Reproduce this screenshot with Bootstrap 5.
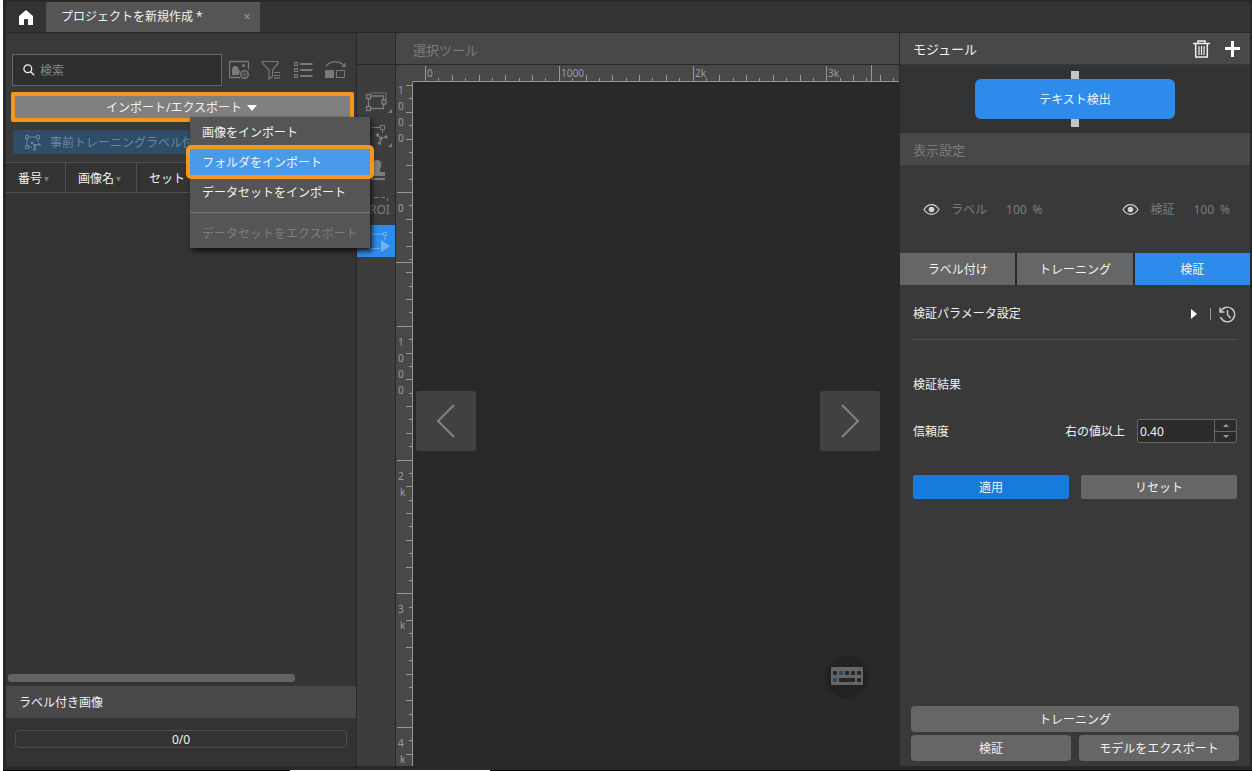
<!DOCTYPE html>
<html lang="ja" data-bs-theme="dark">
<head>
<meta charset="utf-8">
<meta name="viewport" content="width=device-width, initial-scale=1">
<title>プロジェクトを新規作成</title>
<link href="https://cdn.jsdelivr.net/npm/bootstrap@5.3.0/dist/css/bootstrap.min.css" rel="stylesheet">
<style>
  :root { --edge: #282828; --bar: #484848; --deep: #333; --panel: #393939; --blue: #2d8ceb; --grey: #666; --mark: #f4971c; --dim: #7c7c7c; }
  body { font: 12px/18px "Noto Sans", "Noto Sans CJK JP", sans-serif; color: #f2f2f2; background: var(--edge); min-height: 100vh; }
  svg { display: block; flex: none; }
  button { font: inherit; color: inherit; border: 0; padding: 0; background: none; }
  .app-shell { height: 100vh; border-left: 3px solid #fff; }
  .app-frame { padding: 2px 2px 4px 3px; min-height: 0; }
  .desk-edge { height: 1px; background: #050505; }
  .desk-window { width: 16%; height: 1px; margin-left: 23%; background: #fff; }
  .title-row { height: 30px; background: var(--deep); }
  .home-btn { width: 40px; }
  .doc-tab { width: 214px; background: #555; padding: 0 8px 0 15px; }
  .close-x { color: #999; width: 10px; height: 18px; }
  .work { gap: 1px; margin-top: 1px; min-height: 0; }
  .side-col { width: 350px; flex: none; background: var(--panel); min-height: 0; }
  .bar-title { height: 31px; padding: 0 13px; font-size: 13px; background: var(--bar); flex: none; }
  .bar-title.sub { height: 32px; padding-top: 2px; }
  .bar-title.small-txt { font-size: 12px; }
  .muted-txt { color: var(--dim); }

  .left-tools { padding: 21px 1px 8px 5px; }
  .search-row { gap: 7px; margin: 0 9px 6px 1px; }
  .search-box { width: 210px; height: 32px; border: 1px solid #666; background: #2f2f2f; padding: 0 10px; gap: 5px; }
  .search-box input { background: none; border: 0; outline: 0; color: #ddd; width: 100%; padding: 2px 0 0; font: inherit; }
  .search-box input::placeholder { color: #858585; opacity: 1; }
  .tool-ic { color: #7a7a7a; }
  .import-btn { width: 343px; height: 30px; padding: 2px 2px 0 0; border: 4px solid var(--mark); border-radius: 2px; background: #808080; gap: 5px; }
  .pretrain-btn { width: 338px; height: 24px; margin: 8px 0 0 2px; background: #2d4d69; color: #6d869b; border-radius: 2px; padding: 2px 0 0 12px; gap: 9px; white-space: nowrap; }
  .import-menu { position: absolute; left: 179px; top: 25px; z-index: 5; width: 180px; background: #555; padding: 2px 0; gap: 4px; box-shadow: 2px 3px 5px #111; }
  .import-menu button { height: 26px; padding: 2px 12px 0; text-align: left; white-space: nowrap; }
  .import-menu .picked { background: #4a9aec; outline: 4px solid var(--mark); border-radius: 1px; }
  .import-menu hr { margin: 3px 0; border-top: 1px solid #747474; opacity: 1; }
  .import-menu button:disabled { color: #7d7d7d; }

  .list-area { background: #343434; }
  .img-table { width: 100%; table-layout: fixed; border-collapse: separate; border-spacing: 0; background: var(--deep); border-top: 1px solid #505050; border-bottom: 1px solid #505050; }
  .img-table th { height: 29px; padding: 2px 0 0 12px; font-weight: 400; border-right: 1px solid #505050; }
  .img-table th:last-child { border-right: 0; }
  .caret { display: inline-block; vertical-align: 1px; margin-left: 2px; color: #777; }
  .h-scroll { width: 287px; height: 8px; margin: 0 2px 4px; border-radius: 3px; background: #636363; }
  .count-area { background: var(--deep); padding: 12px 9px 18px; }
  .count-box { height: 18px; border: 1px solid #4e4e4e; border-radius: 4px; line-height: 18px; }

  .strip { width: 38px; flex: none; gap: 1px; }
  .strip-head { height: 31px; background: #3d3d3d; flex: none; }
  .strip-tools { background: #3d3d3d; padding-top: 20px; gap: 3px; color: #7c7c7c; }
  .strip-tools button { height: 32px; }
  .strip-tools .on { background: var(--blue); color: #73b2f1; }

  .stage { min-width: 0; gap: 1px; }
  .stage-head { padding: 2px 13px 0 17px; }
  .ruler { background: var(--bar); overflow: hidden; flex: none; }
  .ruler-x { height: 17px; }
  .ruler-y { width: 17px; }
  .ruler svg { width: 100%; height: 100%; }
  .ruler path { fill: none; stroke: #989898; }
  .ruler text { fill: #9c9c9c; font-size: 10px; }
  .canvas-area { background: #292929; padding: 0 19px 6px 3px; min-width: 0; }
  .step-btn { width: 60px; height: 60px; border-radius: 3px; background: #414141; color: #828282; }
  .keys-btn { position: absolute; right: 32px; bottom: 70px; width: 40px; height: 40px; border-radius: 50%; background: #222; box-shadow: 0 1px 3px #1c1c1c; }

  .module-head { padding-right: 9px; }
  .module-head button:last-child { margin-left: 15px; }
  .flow { background: var(--deep); padding: 6px 0; margin-top: 1px; height: 68px; }
  .port { width: 8px; height: 8px; background: #c4c4c4; }
  .node-btn { width: 200px; height: 40px; padding-top: 2px; border-radius: 6px; background: var(--blue); }
  .show-row { padding: 2px 20px 0 23px; height: 88px; color: var(--dim); }
  .show-row svg { color: #d2d2d2; margin-right: 11px; }
  .pct { margin-left: 19px; gap: 6px; }
  .mode-tabs { gap: 2px; background: var(--edge); }
  .mode-tabs button { height: 32px; padding-top: 2px; flex: 1 1 0; background: var(--grey); }
  .mode-tabs .on { background: var(--blue); }
  .block { padding: 0 13px; }
  .param-row { height: 55px; padding-top: 4px; padding-right: 1px; border-bottom: 1px solid #505050; }
  .sep { width: 1px; height: 12px; background: #999; margin: 0 8px 0 12px; }
  .result-title { margin-top: 36px; }
  .conf-row { margin-top: 25px; }
  .conf-row > span, .conf-row > label { padding-top: 2px; }
  .spin { width: 100px; height: 24px; border: 1px solid #666; border-radius: 2px; background: #2c2c2c; margin-left: 12px; }
  .spin input { width: 76px; background: none; border: 0; padding: 2px 2px 0; color: inherit; font: inherit; outline: 0; }
  .spin-keys { width: 22px; border-left: 1px solid #666; color: #999; }
  .spin-keys button + button { border-top: 1px solid #666; }
  .act-row { gap: 12px; margin-top: 32px; }
  .half { height: 24px; padding-top: 2px; border-radius: 2px; background: var(--grey); }
  .apply { background: #167bdd; }
  .run-area { padding: 0 11px 5px; gap: 3px; }
  .run-area button { height: 26px; padding-top: 2px; border-radius: 4px; background: var(--grey); }
</style>
</head>
<body>
<div class="app-shell d-flex flex-column">
<div class="app-frame d-flex flex-column flex-fill">
  <header class="title-row d-flex">
    <button class="home-btn d-flex align-items-center justify-content-center" aria-label="ホーム">
      <svg width="14" height="15" viewBox="0 0 14 15"><path d="M7 0 14 6v9H9v-5a1 1 0 0 0-1-1H6a1 1 0 0 0-1 1v5H0V6z" fill="#fff"/></svg>
    </button>
    <div class="doc-tab d-flex align-items-center justify-content-between">
      <span>プロジェクトを新規作成 *</span><button class="close-x" aria-label="閉じる">×</button>
    </div>
  </header>

  <div class="work d-flex flex-fill">
    <aside class="side-col d-flex flex-column">
      <div class="left-tools">
        <div class="search-row d-flex align-items-center">
          <label class="search-box d-flex align-items-center">
            <svg width="12" height="12" viewBox="0 0 12 12" fill="none" stroke="#eee" stroke-width="1.3"><circle cx="4.800" cy="4.800" r="3.900"/><path d="m7.700 7.700 3.500 3.500"/></svg>
            <input type="text" placeholder="検索" aria-label="検索">
          </label>
          <div class="tool-ic d-flex flex-fill justify-content-between">
            <button aria-label="画像表示"><svg width="21" height="20" viewBox="0 0 21 20" fill="none" stroke="currentColor"><path d="M11 17.500H.5v-16h19v8" stroke-width="1.300"/><path d="M3 15V10c0-5 6-6 7 0l1 1-1 4z" fill="currentColor" stroke="none"/><circle cx="14.500" cy="5.500" r="1.600" fill="currentColor" stroke="none"/><circle cx="15.500" cy="14.500" r="3.800" stroke-width="1.500"/><circle cx="15.500" cy="14.500" r="1.300"/></svg></button>
            <button aria-label="フィルター"><svg width="20" height="20" viewBox="0 0 20 20" fill="none" stroke="currentColor" stroke-width="1.200"><path d="M.5 1.500H16v2L10.500 10v6.500L7 19V10L.5 3.500zM12 12.500h6M12 15.500h6M12 17.800h6"/></svg></button>
            <button aria-label="リスト"><svg width="19" height="20" viewBox="0 0 19 20" fill="none" stroke="currentColor"><path d="M.5 2.500h3v3h-3zM.5 8.500h3v3h-3zM.5 14.500h3v3h-3z" stroke-width="1.200"/><path d="M6 4h12.500M6 10h12.500M6 16h12.500" stroke-width="2"/></svg></button>
            <button aria-label="入れ替え"><svg width="21" height="20" viewBox="0 0 21 20" fill="none" stroke="currentColor"><path d="M.5 6.500C5 .5 15 .5 19.500 6M20 3v3.500h-3.500" stroke-width="1.200"/><path d="M0 10h9v8H0z" fill="currentColor" stroke="none"/><path d="M11.500 10.500h8v7h-8z"/></svg></button>
          </div>
        </div>
        <div class="position-relative">
          <button class="import-btn d-flex align-items-center justify-content-center" aria-expanded="true">インポート/エクスポート
            <svg width="10" height="6" viewBox="0 0 10 6"><path d="M0 0h10L5 6z" fill="#fff"/></svg></button>
          <div class="import-menu d-flex flex-column">
            <button>画像をインポート</button>
            <button class="picked">フォルダをインポート</button>
            <button>データセットをインポート</button>
            <hr>
            <button disabled>データセットをエクスポート</button>
          </div>
        </div>
        <button class="pretrain-btn d-flex align-items-center">
          <svg width="16" height="16" viewBox="0 0 16 16" fill="none" stroke="currentColor"><path d="M.5.500h3v3h-3zM11.500.500h3v3h-3zM.5 10.500h3v3h-3zM4 2h7M2 4v6M13 4v3M4 12h3M7 8l3 2 4-1M10 10v4"/><g fill="currentColor" stroke="none"><circle cx="7" cy="8" r="1.300"/><circle cx="10" cy="10.500" r="1.500"/><circle cx="14.500" cy="9.500" r="1.300"/><circle cx="9.500" cy="14.500" r="1.400"/></g></svg>
          事前トレーニングラベル付け</button>
      </div>
      <div class="list-area d-flex flex-column flex-fill">
        <table class="img-table">
          <colgroup><col width="60"><col width="71"><col></colgroup>
          <thead><tr>
            <th scope="col">番号<svg class="caret" width="5" height="5" viewBox="0 0 5 5"><path d="M0 0h5L2.500 5z" fill="currentColor"/></svg></th>
            <th scope="col">画像名<svg class="caret" width="5" height="5" viewBox="0 0 5 5"><path d="M0 0h5L2.500 5z" fill="currentColor"/></svg></th>
            <th scope="col">セット</th>
          </tr></thead>
        </table>
        <div class="h-scroll mt-auto"></div>
      </div>
      <div class="bar-title sub small-txt d-flex align-items-center">ラベル付き画像</div>
      <div class="count-area"><div class="count-box text-center">0/0</div></div>
    </aside>

    <nav class="strip d-flex flex-column" aria-label="ツール">
      <div class="strip-head"></div>
      <div class="strip-tools d-flex flex-column flex-fill">
        <button aria-label="多角形"><svg width="38" height="32" viewBox="0 0 38 32" fill="none" stroke="currentColor"><g stroke-width="1.300"><path d="M9.500 9.500h4v4h-4zM25 15h4v4h-4zM9.500 21.500h4v4h-4zM14 11h12.500v4M11.500 14v7M14 23.500h12.500V19"/></g><path d="M14 8h15v7" stroke-width="1.500" opacity=".6"/><path d="M35 24v4h-4z" fill="currentColor" stroke="none"/></svg></button>
        <button aria-label="自動ラベル"><svg width="38" height="32" viewBox="0 0 38 32" fill="none" stroke="currentColor"><path d="M9.500 5.500h4v4h-4zM23.500 5.500h4v4h-4zM9.500 18.500h4v4h-4zM14 7.500h9M11.500 10v8M25.500 10v3M20 15l4 3 5-1M24 18l-1 5"/><g fill="currentColor" stroke="none"><circle cx="20.500" cy="15" r="1.800"/><circle cx="24" cy="18.500" r="2"/><circle cx="29" cy="17" r="1.800"/><circle cx="22.500" cy="23" r="1.800"/><path d="M35 23v4h-4z"/></g></svg></button>
        <button aria-label="スタンプ"><svg width="38" height="32" viewBox="0 0 38 32" fill="currentColor"><path d="M17 14c-3-5-1-9 3-9s6 4 3 9v3h5v4H12v-4h5zM12 23h16v2H12z"/></svg></button>
        <button aria-label="ROI"><svg width="38" height="32" viewBox="0 0 38 32" fill="none" stroke="currentColor"><path d="M10 7.500h20" stroke-dasharray="4 3"/><path d="M30.500 8v3"/><text x="12" y="24" font-size="12" fill="currentColor" stroke="none">ROI</text></svg></button>
        <button class="on" aria-label="選択ツール"><svg width="38" height="32" viewBox="0 0 38 32" fill="none" stroke="currentColor"><path d="M9.500 7.500h3v3h-3zM26.500 7.500h3v3h-3zM9.500 21.500h3v3h-3zM13 9h13M11 11v10M28 11v4M13 23.500h10"/><path d="m24 15 9 6-9 6z" fill="currentColor" stroke="none"/></svg></button>
      </div>
    </nav>

    <main class="stage d-flex flex-column flex-fill">
      <div class="bar-title stage-head muted-txt d-flex align-items-center">選択ツール</div>
      <div class="d-flex flex-column flex-fill">
        <div class="ruler ruler-x"><svg id="rulerX"></svg></div>
        <div class="d-flex flex-fill">
          <div class="ruler ruler-y"><svg id="rulerY"></svg></div>
          <div class="canvas-area position-relative d-flex flex-fill align-items-center justify-content-between">
            <button class="step-btn d-flex align-items-center justify-content-center" aria-label="前へ"><svg width="20" height="34" viewBox="0 0 20 34" fill="none" stroke="currentColor" stroke-width="2"><path d="M18 1 2 17l16 16"/></svg></button>
            <button class="step-btn d-flex align-items-center justify-content-center" aria-label="次へ"><svg width="20" height="34" viewBox="0 0 20 34" fill="none" stroke="currentColor" stroke-width="2"><path d="m2 1 16 16L2 33"/></svg></button>
            <button class="keys-btn d-flex align-items-center justify-content-center" aria-label="キーボード"><svg width="32" height="18" viewBox="0 0 32 18"><rect width="32" height="18" rx="1" fill="#656565"/><g fill="#262626"><rect x="2" y="4" width="4" height="4" rx="1"/><rect x="14" y="4" width="4" height="4" rx="1"/><rect x="20" y="4" width="4" height="4" rx="1"/><rect x="26" y="4" width="4" height="4" rx="1"/><rect x="8" y="11" width="16" height="4" rx="1"/><rect x="26" y="11" width="4" height="4" rx="1"/></g><g fill="#294866"><rect x="8" y="4" width="4" height="4" rx="1"/><rect x="2" y="11" width="4" height="4" rx="1"/></g></svg></button>
          </div>
        </div>
      </div>
    </main>

    <aside class="side-col d-flex flex-column">
      <div class="bar-title module-head d-flex align-items-center">モジュール
        <button class="ms-auto" aria-label="削除"><svg width="17" height="18" viewBox="0 0 17 18" fill="none" stroke="#eee"><path d="M0 3.500h17M5 3V1h7v2" stroke-width="1.500"/><path d="M2.700 4v13h11.600V4" stroke-width="1.500"/><path d="M6 6v9M8.500 6v9M11 6v9" stroke-width="1.200"/></svg></button>
        <button aria-label="追加"><svg width="16" height="16" viewBox="0 0 16 16"><path d="M7.500 0v16M0 7.500h15" stroke="#fff" stroke-width="3"/></svg></button>
      </div>
      <div class="flow d-flex flex-column align-items-center">
        <div class="port"></div><button class="node-btn">テキスト検出</button><div class="port"></div>
      </div>
      <div class="bar-title sub muted-txt d-flex align-items-center">表示設定</div>
      <div class="show-row d-flex align-items-center justify-content-between">
        <span class="d-flex align-items-center"><svg width="17" height="12" viewBox="0 0 17 12"><path d="M1 5.500c4-6.500 11-6.500 15 0-4 6.500-11 6.500-15 0z" fill="none" stroke="currentColor" stroke-width="1.200"/><circle cx="8.500" cy="5.500" r="2.800" fill="currentColor"/></svg>ラベル<span class="pct d-flex"><span>100</span><span>%</span></span></span>
        <span class="d-flex align-items-center"><svg width="17" height="12" viewBox="0 0 17 12"><path d="M1 5.500c4-6.500 11-6.500 15 0-4 6.500-11 6.500-15 0z" fill="none" stroke="currentColor" stroke-width="1.200"/><circle cx="8.500" cy="5.500" r="2.800" fill="currentColor"/></svg>検証<span class="pct d-flex"><span>100</span><span>%</span></span></span>
      </div>
      <div class="mode-tabs d-flex"><button>ラベル付け</button><button>トレーニング</button><button class="on">検証</button></div>
      <div class="block">
        <div class="param-row d-flex align-items-center">検証パラメータ設定
          <button class="ms-auto" aria-label="展開"><svg width="7" height="12" viewBox="0 0 7 12"><path d="M0 1v10l6-5z" fill="#fff"/></svg></button>
          <span class="sep"></span>
          <button aria-label="履歴"><svg width="17" height="17" viewBox="0 0 17 17" fill="none" stroke="#ccc" stroke-width="1.400"><path d="M1.500 6A7.300 7.300 0 1 1 1.500 11M1 1.500V6h4.500M8.500 4v4.500l3 3.500"/></svg></button>
        </div>
        <div class="result-title">検証結果</div>
        <div class="conf-row d-flex align-items-center">
          <span>信頼度</span><label class="ms-auto" for="conf">右の値以上</label>
          <div class="spin d-flex">
            <input id="conf" type="text" value="0.40">
            <div class="spin-keys d-flex flex-column">
              <button class="flex-fill d-flex align-items-center justify-content-center" aria-label="増やす"><svg width="6" height="3" viewBox="0 0 6 3"><path d="M3 0 6 3H0z" fill="currentColor"/></svg></button>
              <button class="flex-fill d-flex align-items-center justify-content-center" aria-label="減らす"><svg width="6" height="3" viewBox="0 0 6 3"><path d="M0 0h6L3 3z" fill="currentColor"/></svg></button>
            </div>
          </div>
        </div>
        <div class="act-row d-flex"><button class="half apply w-50">適用</button><button class="half w-50">リセット</button></div>
      </div>
      <div class="run-area d-flex flex-column mt-auto">
        <button>トレーニング</button>
        <div class="d-flex gap-2"><button class="w-50">検証</button><button class="w-50">モデルをエクスポート</button></div>
      </div>
    </aside>
  </div>
</div>
<div class="desk-edge"><div class="desk-window"></div></div>
</div>

<script src="https://cdn.jsdelivr.net/npm/bootstrap@5.3.0/dist/js/bootstrap.bundle.min.js"></script>
<script>
  // Each labelled division of a ruler holds ten ticks; every second one is longer.
  const DIVISION = 133.75;
  const nameOf = i => i === 0 ? '0' : i === 1 ? '1000' : i + 'k';
  const rulerX = document.getElementById('rulerX');
  const rulerY = document.getElementById('rulerY');

  function tickPath(zero, first, length, vertical) {
    let d = '';
    for (let k = first; ; k++) {
      const p = Math.round(zero + k * DIVISION / 10) + 0.5;
      if (p > length) return d;
      const from = k % 10 === 0 ? 1 : k % 2 === 0 ? 10 : 13;
      d += vertical ? `M${from} ${p}H17` : `M${p} ${from}V17`;
    }
  }

  const column = (label, top) =>
    [...label].map((c, i) => `<text x="${c === 'k' ? 4 : 2}" y="${top + i * 16}">${c}</text>`).join('');

  function drawRulers() {
    const w = rulerX.parentElement.clientWidth;
    const h = rulerY.parentElement.clientHeight;
    let x = '', y = column('1000', 12);
    for (let i = 0; 45 + i * DIVISION < w; i++) x += `<text x="${Math.round(31 + i * DIVISION)}" y="12">${nameOf(i)}</text>`;
    for (let i = 0; 146 + i * DIVISION < h; i++) y += column(nameOf(i), Math.round(130 + i * DIVISION));
    rulerX.innerHTML = `<path d="${tickPath(29, 0, w, false)}M17 16.500H${w}M475.500 0V17"/>${x}`;
    rulerY.innerHTML = `<path d="${tickPath(110, -8, h, true)}M16.500 0V${h}M0 180.500H17"/>${y}`;
  }
  drawRulers();
  addEventListener('resize', drawRulers);
</script>
</body>
</html>
